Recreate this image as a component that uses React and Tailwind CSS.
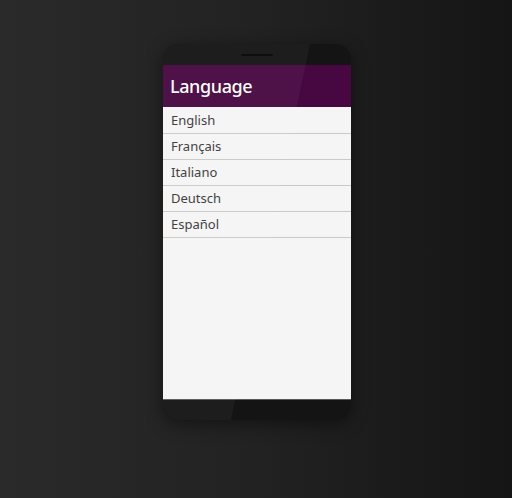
import React from "react";

const languages = ["English", "Français", "Italiano", "Deutsch", "Español"];

const App = () => {
  return (
    <div className="w-full h-[498px] flex justify-center pt-[44px] pl-[2px] bg-linear-to-r from-[#2a2a2a] via-[#222222] to-[#151515] font-['Noto_Sans',sans-serif]">
      {/* phone body */}
      <div className="relative w-[188px] h-[376px] rounded-[16px] bg-[#141414] overflow-hidden shadow-[0_4px_18px_rgba(0,0,0,0.45)] flex flex-col">
        {/* top bezel with speaker */}
        <div className="h-[21px] shrink-0 flex justify-center pt-[10px]">
          <div className="w-[32px] h-[2px] rounded-full bg-[#050505]" />
        </div>

        {/* screen */}
        <div className="flex-1 flex flex-col bg-[#f5f5f5] border-b border-[#5a5a5a]">
          <header className="h-[42px] shrink-0 bg-[#470841] flex items-center px-[7px] pt-px">
            <h1 className="text-[18px] font-medium text-white tracking-[-0.4px]">Language</h1>
          </header>
          <ul className="pt-px">
            {languages.map((lang) => (
              <li
                key={lang}
                className="h-[26px] flex items-center px-[8px] border-b border-[#c9c9c9] text-[13px] text-[#3a3a3a]"
              >
                {lang}
              </li>
            ))}
          </ul>
        </div>

        {/* bottom bezel */}
        <div className="h-[20px] shrink-0" />

        {/* glass reflection */}
        <div className="absolute inset-0 pointer-events-none bg-white/[0.04] [clip-path:polygon(0_0,147px_0,68px_100%,0_100%)]" />
      </div>
    </div>
  );
};

export default App;
